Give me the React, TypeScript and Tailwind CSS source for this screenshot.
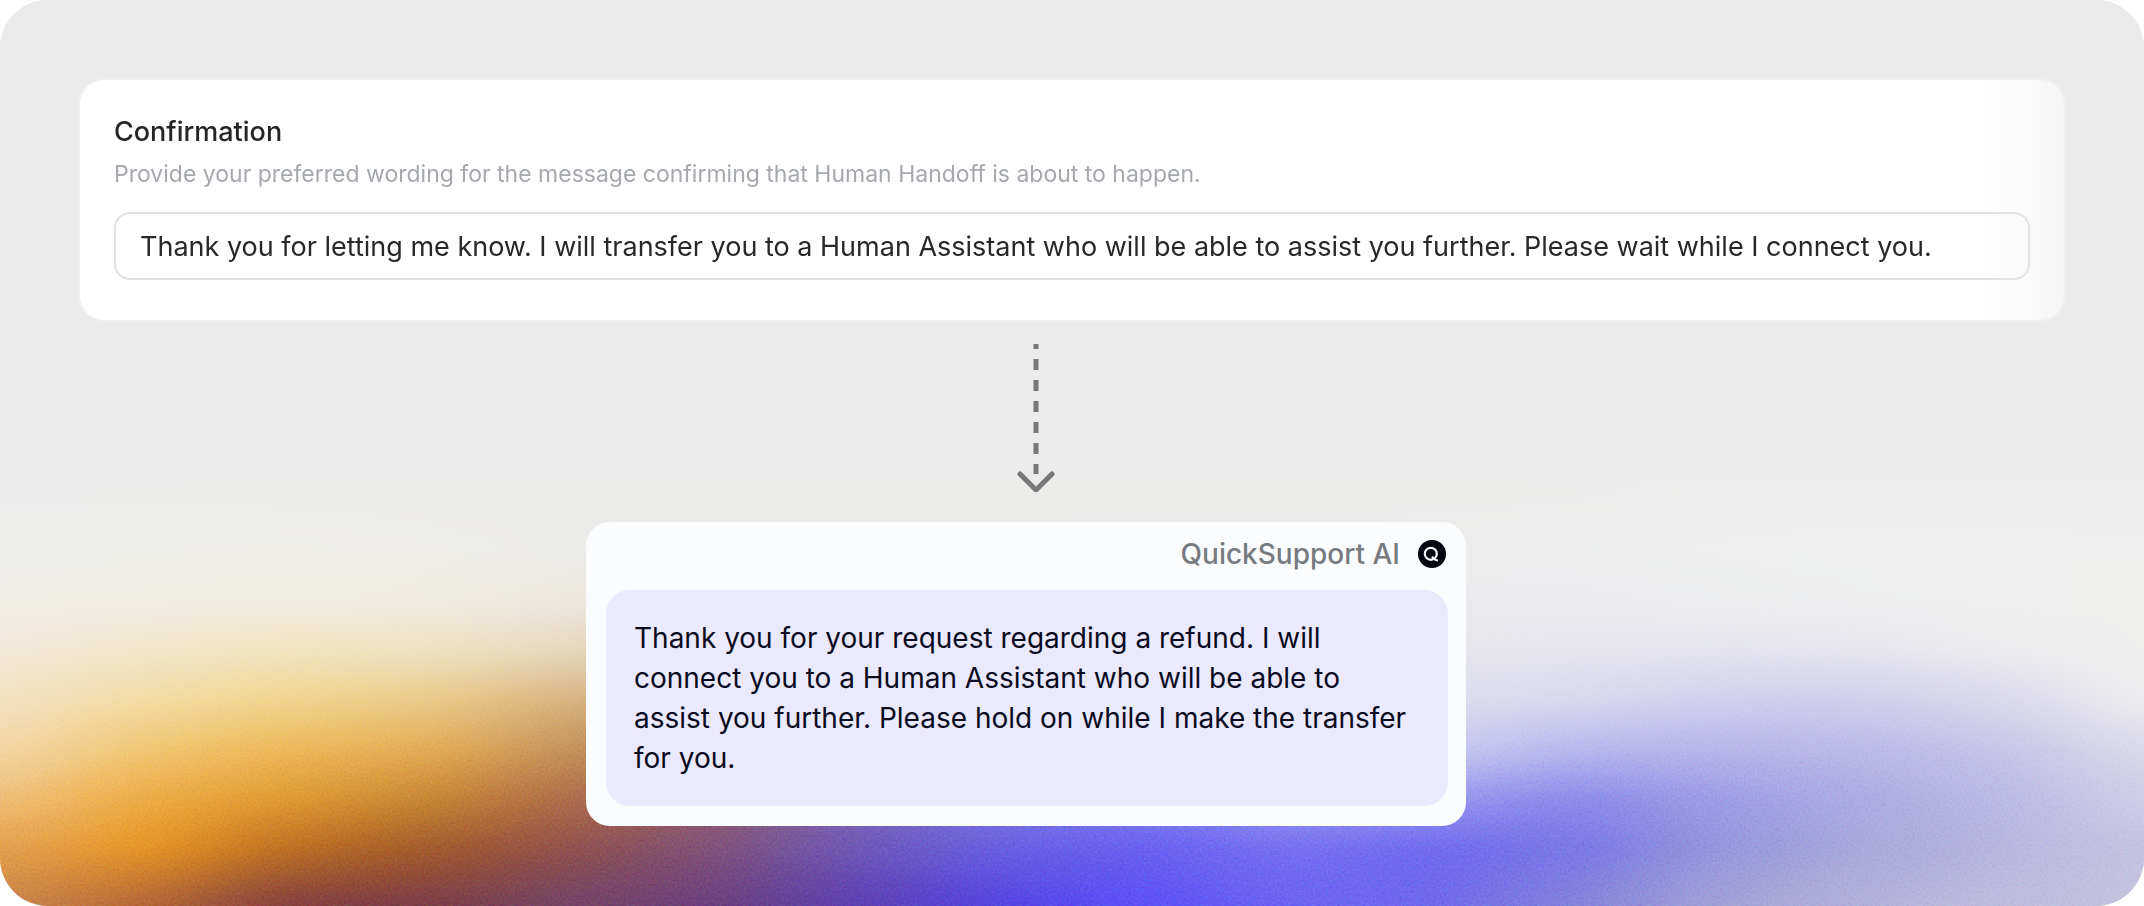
import React, { useState } from 'react';

interface GlowColumn {
  x: number;
  colors: string[];
}

// vertical positions of the colour stops, shared by all columns
const STOPS = [495, 550, 602, 652, 702, 752, 800, 848, 904];
const COLUMN_WIDTH = 143;
const TOP = -60;
const HEIGHT = 1026;

const GLOW: GlowColumn[] = [
  { x: 0, colors: ['#ebebeb', '#eeeeec', '#f0ede6', '#f1e8d8', '#f4e2c2', '#f3d6a6', '#efc07a', '#e5a050', '#cc864a'] },
  { x: 143, colors: ['#ebebea', '#eeeeea', '#f0ece2', '#f2e6ca', '#f3dba2', '#f1c670', '#efab42', '#e99822', '#b86834'] },
  { x: 286, colors: ['#ebebea', '#eeede8', '#f0ece0', '#f2e4be', '#f1d48c', '#eeb754', '#e29a30', '#c07020', '#823e40'] },
  { x: 429, colors: ['#ebebe9', '#edece8', '#efebe0', '#efe2c2', '#ebca86', '#e4ac54', '#c88630', '#a45a2a', '#7c3c46'] },
  { x: 572, colors: ['#ebebe9', '#ebebe8', '#ede8de', '#e6d8bc', '#d9b27e', '#c49158', '#ae6c4a', '#92504c', '#744468'] },
  { x: 715, colors: ['#ebebea', '#ebebe9', '#e6e0da', '#d3c1b1', '#c09a80', '#a87466', '#925a68', '#80527c', '#6c3e7e'] },
  { x: 858, colors: ['#ebebea', '#ebebea', '#e2e0e2', '#c8c0cc', '#aa9cb8', '#9080b8', '#7d6abc', '#6e58ba', '#5c3fb4'] },
  { x: 1001, colors: ['#ebebea', '#ebebea', '#e6e6ea', '#d0cee0', '#b4b0dc', '#9892dc', '#8078de', '#6a5fe4', '#5643e6'] },
  { x: 1144, colors: ['#ebebea', '#ececec', '#e9e9ee', '#dadaec', '#c2c0ec', '#a4a2ee', '#8482f0', '#6660f2', '#5c50f8'] },
  { x: 1287, colors: ['#ebebea', '#ececec', '#eaeaee', '#e2e2ec', '#d0d0ee', '#b8b8f0', '#9c9af0', '#7672f0', '#6c64f4'] },
  { x: 1430, colors: ['#ebebea', '#ececec', '#ebebee', '#e6e6ec', '#dcdcee', '#cacaf0', '#9998f0', '#6e6af0', '#6e68ee'] },
  { x: 1573, colors: ['#ebebea', '#eeeeee', '#eaeaee', '#e6e6ee', '#d8d8ee', '#b6b6ee', '#8a88ea', '#7777e8', '#8682da'] },
  { x: 1716, colors: ['#ecedec', '#eeefee', '#ecedee', '#e4e4ee', '#d0cfee', '#b6b4ea', '#9e9ce6', '#9696dc', '#a4a2d8'] },
  { x: 1859, colors: ['#ecedec', '#eff0ef', '#eeeeef', '#e5e5ee', '#cfceec', '#bab8e8', '#acabe4', '#a8a8dc', '#b4b2da'] },
  { x: 2002, colors: ['#ecedec', '#eff0ef', '#eff0ef', '#ebebee', '#d9d8ec', '#c5c4e8', '#bab9e4', '#b8b6de', '#bebcde'] },
  { x: 2144, colors: ['#ecedec', '#eeefee', '#f0f0ee', '#f0f0ee', '#ededee', '#dadaea', '#cfcee8', '#c6c4e2', '#c6c4e0'] },
];

function GlowBackground() {
  const last = GLOW.length - 1;

  return (
    <svg
      className="absolute inset-0 h-full w-full"
      viewBox="0 0 2144 906"
      preserveAspectRatio="none"
      aria-hidden="true"
    >
      <defs>
        <filter id="glow-blur" filterUnits="userSpaceOnUse" x="-300" y="-60" width="2744" height="1026" colorInterpolationFilters="sRGB">
          <feGaussianBlur stdDeviation="56 8" />
        </filter>
        <filter id="grain" filterUnits="userSpaceOnUse" x="0" y="560" width="2144" height="346" colorInterpolationFilters="sRGB">
          <feTurbulence type="fractalNoise" baseFrequency="0.45" numOctaves="2" seed="4" />
          <feColorMatrix values="1 0 0 0 0  0 1 0 0 0  0 0 1 0 0  0 0 0 0 1" />
        </filter>
        <linearGradient id="grain-fade" x1="0" y1="0" x2="0" y2="1">
          <stop offset="0" stopColor="#000" />
          <stop offset="0.6" stopColor="#fff" />
        </linearGradient>
        <mask id="grain-mask">
          <rect x="0" y="560" width="2144" height="346" fill="url(#grain-fade)" />
        </mask>
        {GLOW.map((column, i) => (
          <linearGradient key={column.x} id={`glow-${i}`} x1="0" y1="0" x2="0" y2="1">
            <stop offset={(470 - TOP) / HEIGHT} stopColor="#ebebeb" />
            {column.colors.map((color, j) => (
              <stop key={STOPS[j]} offset={(STOPS[j] - TOP) / HEIGHT} stopColor={color} />
            ))}
          </linearGradient>
        ))}
      </defs>
      <g filter="url(#glow-blur)">
        {GLOW.map((column, i) => {
          const start = i === 0 ? -300 : column.x - COLUMN_WIDTH / 2;
          const end = i === last ? 2444 : column.x + COLUMN_WIDTH / 2 + 1;
          return <rect key={column.x} x={start} y={TOP} width={end - start} height={HEIGHT} fill={`url(#glow-${i})`} />;
        })}
      </g>
      <g className="mix-blend-soft-light" mask="url(#grain-mask)">
        <rect x="0" y="560" width="2144" height="346" filter="url(#grain)" opacity="0.35" />
      </g>
    </svg>
  );
}

function DashedArrow() {
  return (
    <svg width="38" height="152" viewBox="0 0 38 152" fill="none" stroke="#777777" aria-hidden="true">
      <path d="M19 4v5" strokeWidth="5" />
      <path d="M19 19v115" strokeWidth="5" strokeDasharray="11 10" />
      <path d="M3 134l16 16 16-16" strokeWidth="5" strokeLinecap="round" strokeLinejoin="round" />
    </svg>
  );
}

function BotAvatar() {
  return (
    <svg width="28" height="28" viewBox="0 0 28 28" fill="none" aria-hidden="true">
      <circle cx="14" cy="14" r="14" fill="#03050f" />
      <circle cx="12.8" cy="13.8" r="6" stroke="#fff" strokeWidth="2.2" />
      <path d="M14 16.5c1.600 2.600 3.400 3.800 6 4" stroke="#fff" strokeWidth="2" />
    </svg>
  );
}

export default function App() {
  const [message, setMessage] = useState(
    'Thank you for letting me know. I will transfer you to a Human Assistant who will be able to assist you further. Please wait while I connect you.'
  );

  return (
    <main className="relative min-h-screen overflow-hidden rounded-[48px] bg-[#ebebeb] font-['Inter',sans-serif]">
      <GlowBackground />

      <div className="relative flex flex-col p-20">
        {/* Confirmation setting */}
        <section className="rounded-3xl bg-linear-to-r from-white from-96% to-[#f5f5f5] px-[34px] pt-[34px] pb-10 shadow-[0_0_4px_rgba(255,255,255,0.6)]">
          <label htmlFor="confirmation" className="block text-[27px] leading-9 font-medium text-[#232526]">
            Confirmation
          </label>
          <p id="confirmation-hint" className="mt-1.5 text-[23px] leading-9 text-[#a5a9ae]">
            Provide your preferred wording for the message confirming that Human Handoff is about to happen.
          </p>
          <input
            id="confirmation"
            type="text"
            value={message}
            onChange={(e) => setMessage(e.target.value)}
            aria-describedby="confirmation-hint"
            className="mt-5 block h-[68px] w-full rounded-2xl border-2 border-[#dfe2e3] bg-transparent px-6 text-[27px] text-[#26282a] outline-none"
          />
        </section>

        <div className="mt-5 mr-[72px] flex justify-center">
          <DashedArrow />
        </div>

        {/* Chat preview */}
        <article className="mt-[30px] mr-[92px] w-[880px] max-w-full self-center rounded-3xl bg-[#fafcfd] pr-[18px] pb-5 pl-5">
          <header className="flex h-[68px] items-center justify-end gap-[18px] pr-0.5 pb-1 text-[28px] font-medium text-[#777b80]">
            <span>QuickSupport AI</span>
            <BotAvatar />
          </header>
          <p className="rounded-3xl bg-[#ebe9fe] p-7 text-[28px] leading-10 text-[#0a0b1e]">
            Thank you for your request regarding a refund. I will connect you to a Human Assistant who will be able to
            assist you further. Please hold on while I make the transfer for you.
          </p>
        </article>
      </div>
    </main>
  );
}
